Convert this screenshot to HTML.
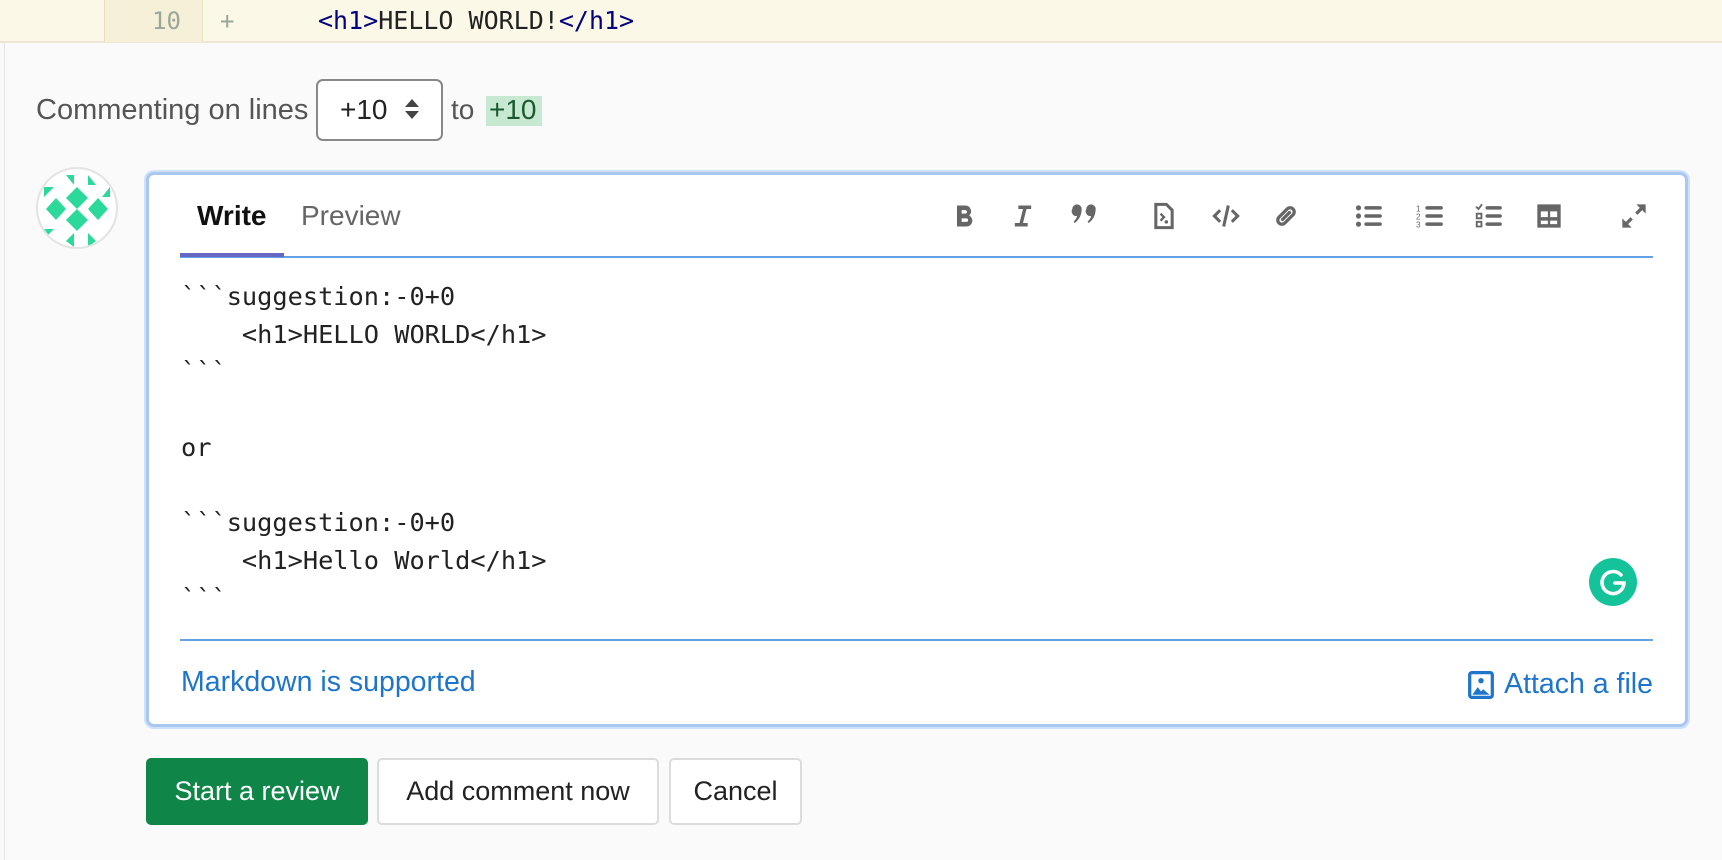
<!DOCTYPE html>
<html><head><meta charset="utf-8"><style>
*{box-sizing:border-box;margin:0;padding:0}
body{width:1722px;height:860px;overflow:hidden;background:#fafafa;font-family:"Liberation Sans",sans-serif;position:relative}
.abs{position:absolute}
.mono{font-family:"DejaVu Sans Mono","Liberation Mono",monospace}
.ic{position:absolute;top:202px;width:28px;height:28px}
.btn{position:absolute;top:758px;height:67px;border-radius:5px;font-size:27px;display:flex;align-items:center;justify-content:center}
</style></head><body>
<div class="abs" style="left:0;top:0;width:1722px;height:43px;background:#fbf8e7;border-bottom:2px solid #ece6d2"></div>
<div class="abs" style="left:104px;top:0;width:99px;height:42px;background:#f6f0d8;border-left:1px solid #ebe1c2;border-right:1px solid #ebe1c2"></div>
<div class="abs mono" style="left:152px;top:7px;font-size:24px;color:#9aa89a">10</div>
<div class="abs mono" style="left:220px;top:7px;font-size:24px;color:#9aa89a">+</div>
<div class="abs mono" style="left:318px;top:6px;font-size:25px;color:#222"><span style="color:#000080">&lt;h1&gt;</span>HELLO WORLD!<span style="color:#000080">&lt;/h1&gt;</span></div>
<div class="abs" style="left:4px;top:43px;width:1px;height:817px;background:#e5e5e5"></div>
<div class="abs" style="left:36px;top:94px;font-size:29px;color:#555">Commenting on lines</div>
<div class="abs" style="left:316px;top:79px;width:127px;height:62px;border:2px solid #888;border-radius:7px;background:#fff"></div>
<div class="abs" style="left:340px;top:94px;font-size:28px;color:#222">+10</div>
<div class="abs" style="left:405px;top:99px;width:0;height:0;border-left:7px solid transparent;border-right:7px solid transparent;border-bottom:8px solid #444"></div>
<div class="abs" style="left:405px;top:111px;width:0;height:0;border-left:7px solid transparent;border-right:7px solid transparent;border-top:8px solid #444"></div>
<div class="abs" style="left:451px;top:94px;font-size:28px;color:#555">to</div>
<div class="abs" style="left:486px;top:96px;width:56px;height:30px;background:#c7e8d1"></div>
<div class="abs" style="left:489px;top:94px;font-size:28px;color:#1a5a2e">+10</div>
<svg class="abs" style="left:36px;top:167px" width="82" height="82" viewBox="0 0 82 82">
<defs><clipPath id="c"><circle cx="41" cy="41" r="39"/></clipPath></defs>
<circle cx="41" cy="41" r="40" fill="#fff" stroke="#e3e3e3" stroke-width="2"/>
<g clip-path="url(#c)" fill="#2bd99b">
<polygon points="41,20 52,31 41,42 30,31"/><polygon points="41,42 52,53 41,64 30,53"/>
<polygon points="20,31 30,42 20,53 10,42"/><polygon points="62,31 72,42 62,53 52,42"/>
<polygon points="30,8 38,8 38,18"/><polygon points="52,8 60,18 52,18"/><polygon points="8,20 18,20 8,30"/><polygon points="74,20 74,30 66,30"/>
<polygon points="8,62 18,62 8,72"/><polygon points="74,62 74,72 66,72"/><polygon points="30,74 38,66 38,80"/><polygon points="52,66 60,74 52,80"/>
</g></svg>
<div class="abs" style="left:146px;top:172px;width:1542px;height:555px;border:3px solid #a8c8f0;border-radius:8px;background:#fff;box-shadow:0 0 0 2px #cfe1fa"></div>
<div class="abs" style="left:197px;top:200px;font-size:28px;font-weight:bold;color:#111">Write</div>
<div class="abs" style="left:301px;top:200px;font-size:28px;color:#666">Preview</div>
<div class="abs" style="left:180px;top:256px;width:1473px;height:2px;background:#63a0e6"></div>
<div class="abs" style="left:180px;top:253px;width:104px;height:4px;background:#6666c4"></div>
<svg class="ic" style="left:950px" viewBox="0 0 24 24"><path fill="#666" d="M6 3h7a5 5 0 0 1 3.5 8.6A5 5 0 0 1 14 21H6zm4 4v3h3a1.5 1.5 0 0 0 0-3zm0 7v3h4a1.5 1.5 0 0 0 0-3z"/></svg>
<svg class="ic" style="left:1009px" viewBox="0 0 24 24"><path fill="#666" d="M8 3h11v3h-4l-3 12h4v3H5v-3h4l3-12H8z"/></svg>
<svg class="ic" style="left:1070px" viewBox="0 0 24 24"><path fill="#666" d="M2 6a4 4 0 0 1 8 0c0 6-3 10-6 12l-1-1c2-2 3-4 3-5a4 4 0 0 1-4-6zm12 0a4 4 0 0 1 8 0c0 6-3 10-6 12l-1-1c2-2 3-4 3-5a4 4 0 0 1-4-6z"/></svg>
<svg class="ic" style="left:1150px" viewBox="0 0 24 24"><path fill="none" stroke="#666" stroke-width="2.6" d="M5 2h9l5 5v15H5z"/><path fill="none" stroke="#666" stroke-width="2" d="M9 10l3 3-3 3"/><circle cx="14" cy="17" r="1.5" fill="#666"/></svg>
<svg class="ic" style="left:1212px" viewBox="0 0 24 24"><path fill="none" stroke="#666" stroke-width="2.6" d="M7 7l-5 5 5 5M17 7l5 5-5 5M14 3l-4 18"/></svg>
<svg class="ic" style="left:1272px" viewBox="0 0 24 24"><path fill="none" stroke="#666" stroke-width="2.8" stroke-linecap="round" d="M9 15l6-6M10 9l-4 4a3.5 3.5 0 0 0 5 5l4-4M14 15l4-4a3.5 3.5 0 0 0-5-5l-4 4" transform="translate(0,0)"/></svg>
<svg class="ic" style="left:1355px" viewBox="0 0 24 24"><g fill="#666"><circle cx="3" cy="5" r="2.2"/><circle cx="3" cy="12" r="2.2"/><circle cx="3" cy="19" r="2.2"/><rect x="8" y="3.5" width="15" height="3" rx="1.5"/><rect x="8" y="10.5" width="15" height="3" rx="1.5"/><rect x="8" y="17.5" width="15" height="3" rx="1.5"/></g></svg>
<svg class="ic" style="left:1416px" viewBox="0 0 24 24"><g fill="#666"><rect x="8" y="3.5" width="15" height="3" rx="1.5"/><rect x="8" y="10.5" width="15" height="3" rx="1.5"/><rect x="8" y="17.5" width="15" height="3" rx="1.5"/></g><text x="0" y="8" font-size="7" fill="#666" font-family="Liberation Sans">1</text><text x="0" y="15" font-size="7" fill="#666" font-family="Liberation Sans">2</text><text x="0" y="22" font-size="7" fill="#666" font-family="Liberation Sans">3</text></svg>
<svg class="ic" style="left:1475px" viewBox="0 0 24 24"><g fill="#666"><rect x="9" y="3.5" width="14" height="3" rx="1.5"/><rect x="9" y="10.5" width="14" height="3" rx="1.5"/><rect x="9" y="17.5" width="14" height="3" rx="1.5"/></g><path fill="none" stroke="#666" stroke-width="1.6" d="M1 4l2 2 3-4M1.5 10h4v4h-4zM1.5 17h4v4h-4z"/></svg>
<svg class="ic" style="left:1535px" viewBox="0 0 24 24"><path fill="#666" d="M2 2h20v20H2zm3 6v5h6V8zm8 0v5h6V8zm-8 8v3h6v-3zm8 0v3h6v-3z"/></svg>
<svg class="ic" style="left:1620px" viewBox="0 0 24 24"><path fill="#666" d="M14 2h8v8l-3-3-4 4-2-2 4-4zM10 22H2v-8l3 3 4-4 2 2-4 4z"/></svg>
<div class="abs mono" style="left:181px;top:278px;font-size:25.3px;line-height:37.7px;color:#222;white-space:pre">&#96;&#96;&#96;suggestion:-0+0
    &lt;h1&gt;HELLO WORLD&lt;/h1&gt;
&#96;&#96;&#96;

or

&#96;&#96;&#96;suggestion:-0+0
    &lt;h1&gt;Hello World&lt;/h1&gt;
&#96;&#96;&#96;</div>
<div class="abs" style="left:1589px;top:558px;width:48px;height:48px;border-radius:50%;background:#15c39a"></div>
<svg class="abs" style="left:1589px;top:558px" width="48" height="48" viewBox="0 0 48 48"><path fill="none" stroke="#fff" stroke-width="3.5" stroke-linecap="round" d="M32 17a11 11 0 1 0 3 8h-9"/></svg>
<div class="abs" style="left:180px;top:639px;width:1473px;height:2px;background:#63a0e6"></div>
<div class="abs" style="left:181px;top:666px;font-size:28.5px;color:#1f75cb">Markdown is supported</div>
<div class="abs" style="right:69px;top:668px;font-size:28.5px;color:#1f75cb;display:flex;align-items:center;gap:10px"><svg width="26" height="28" viewBox="0 0 24 26"><rect x="1.5" y="1.5" width="21" height="23" rx="2" fill="none" stroke="#1f75cb" stroke-width="3"/><circle cx="12" cy="9" r="2.5" fill="#1f75cb"/><path d="M4 22l5-7 3 4 2-2 6 5z" fill="#1f75cb"/></svg><span>Attach a file</span></div>
<div class="btn" style="left:146px;width:222px;background:#108548;color:#fff">Start a review</div>
<div class="btn" style="left:377px;width:282px;background:#fff;border:2px solid #dcdcdc;color:#222">Add comment now</div>
<div class="btn" style="left:669px;width:133px;background:#fff;border:2px solid #dcdcdc;color:#222">Cancel</div>
</body></html>
